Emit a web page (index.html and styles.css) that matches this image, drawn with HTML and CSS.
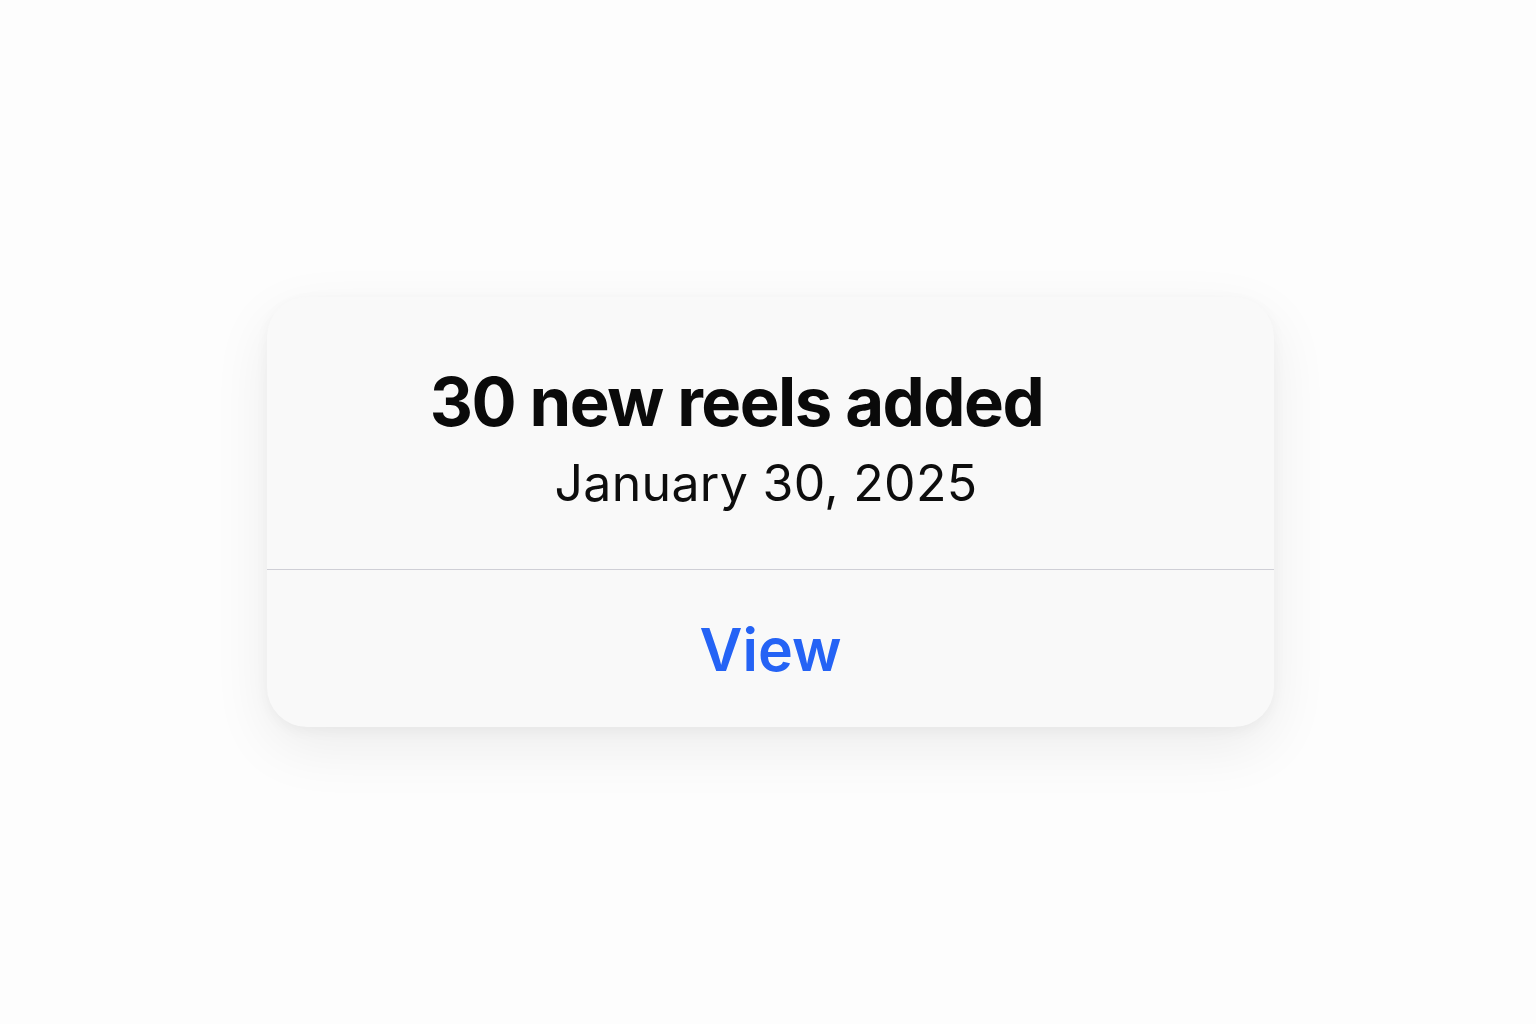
FILE: index.html
```html
<!DOCTYPE html>
<html lang="en">
<head>
<meta charset="utf-8">
<title>Notification</title>
<link rel="stylesheet" href="styles.css">
</head>
<body>
<main class="stage">
  <section class="alert">
    <div class="alert-body">
      <h1 class="alert-title">30 new reels added</h1>
      <p class="alert-date">January 30, 2025</p>
    </div>
    <div class="alert-actions">
      <button class="alert-btn" type="button">View</button>
    </div>
  </section>
</main>
</body>
</html>
```
FILE: styles.css
```css
* { box-sizing: border-box; }
html, body { margin: 0; padding: 0; }
body {
  background: #fdfdfd;
  font-family: Inter, "Noto Sans", "Liberation Sans", sans-serif;
  width: 1536px;
  height: 1024px;
  overflow: hidden;
}
.stage {
  padding-top: 297px;
  padding-left: 267px;
}
.alert {
  width: 1007px;
  height: 430px;
  background: #f9f9f9;
  border-radius: 40px;
  box-shadow: 0 20px 60px rgba(0,0,0,0.07), 0 4px 14px rgba(0,0,0,0.04);
  display: flex;
  flex-direction: column;
  overflow: hidden;
}
.alert-body {
  height: 273px;
  border-bottom: 1px solid #cfcfd6;
  display: flex;
  flex-direction: column;
  align-items: center;
  padding-top: 65px;
}
.alert-title {
  margin: 0;
  font-size: 67px;
  font-weight: 700;
  color: #0a0a0a;
  line-height: 80px;
  letter-spacing: -1.5px;
  padding-right: 68px;
}
.alert-date {
  margin: 0;
  margin-top: 11px;
  font-size: 50px;
  font-weight: 400;
  color: #0d0d0d;
  line-height: 60px;
  letter-spacing: 0.3px;
  padding-right: 9px;
}
.alert-actions {
  flex: 1;
  display: flex;
  align-items: center;
  justify-content: center;
}
.alert-btn {
  border: 0;
  background: none;
  padding: 0;
  font-family: inherit;
  font-size: 59px;
  font-weight: 600;
  color: #2563f5;
  line-height: 1;
  margin-top: 2px;
}
```
